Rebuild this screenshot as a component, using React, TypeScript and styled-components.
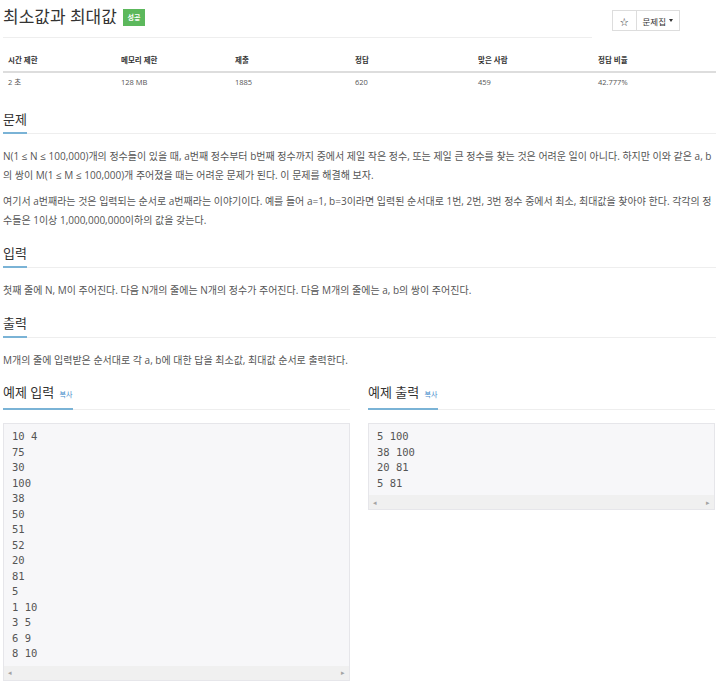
import React from 'react';
import styled, {createGlobalStyle} from "styled-components";

const GlobalStyle = createGlobalStyle`
  body {
    margin: 0;
    background: #fff;
    font-family: "Open Sans", "Noto Sans CJK KR", sans-serif;
    color: #555;
  }
`

const stats = [
    {label: "시간 제한", value: "2 초", width: 113},
    {label: "메모리 제한", value: "128 MB", width: 114},
    {label: "제출", value: "1885", width: 120},
    {label: "정답", value: "620", width: 123},
    {label: "맞은 사람", value: "459", width: 120},
    {label: "정답 비율", value: "42.777%", width: 123},
]

const sampleInput = `10 4
75
30
100
38
50
51
52
20
81
5
1 10
3 5
6 9
8 10`

const sampleOutput = `5 100
38 100
20 81
5 81`

const App = () => {
    return (
        <Page>
            <GlobalStyle/>
            <TitleRow>
                <TitleArea>
                    <Title>최소값과 최대값 <Badge>성공</Badge></Title>
                </TitleArea>
                <ButtonGroup>
                    <GroupButton>☆</GroupButton>
                    <GroupButton>문제집 <Caret/></GroupButton>
                </ButtonGroup>
            </TitleRow>

            <StatsTable>
                <colgroup>
                    {stats.map(s => <col key={s.label} style={{width: s.width}}/>)}
                </colgroup>
                <thead>
                <tr>
                    {stats.map(s => <th key={s.label}>{s.label}</th>)}
                </tr>
                </thead>
                <tbody>
                <tr>
                    {stats.map(s => <td key={s.label}>{s.value}</td>)}
                </tr>
                </tbody>
            </StatsTable>

            <Section>
                <Headline><h2>문제</h2></Headline>
                <Text>
                    <p>N(1 ≤ N ≤ 100,000)개의 정수들이 있을 때, a번째 정수부터 b번째 정수까지 중에서 제일 작은 정수, 또는 제일 큰 정수를 찾는 것은 어려운 일이 아니다. 하지만 이와 같은 a, b의 쌍이 M(1 ≤ M ≤ 100,000)개 주어졌을 때는 어려운 문제가 된다. 이 문제를 해결해 보자.</p>
                    <p>여기서 a번째라는 것은 입력되는 순서로 a번째라는 이야기이다. 예를 들어 a=1, b=3이라면 입력된 순서대로 1번, 2번, 3번 정수 중에서 최소, 최대값을 찾아야 한다. 각각의 정수들은 1이상 1,000,000,000이하의 값을 갖는다.</p>
                </Text>
            </Section>

            <Section>
                <Headline><h2>입력</h2></Headline>
                <Text>
                    <p>첫째 줄에 N, M이 주어진다. 다음 N개의 줄에는 N개의 정수가 주어진다. 다음 M개의 줄에는 a, b의 쌍이 주어진다.</p>
                </Text>
            </Section>

            <Section>
                <Headline><h2>출력</h2></Headline>
                <Text>
                    <p>M개의 줄에 입력받은 순서대로 각 a, b에 대한 답을 최소값, 최대값 순서로 출력한다.</p>
                </Text>
            </Section>

            <Samples>
                <Sample>
                    <Headline><h2>예제 입력 <CopyLink href="#">복사</CopyLink></h2></Headline>
                    <SampleBox>
                        <pre>{sampleInput}</pre>
                        <ScrollBar><span>◂</span><span>▸</span></ScrollBar>
                    </SampleBox>
                </Sample>
                <Sample>
                    <Headline><h2>예제 출력 <CopyLink href="#">복사</CopyLink></h2></Headline>
                    <SampleBox>
                        <pre>{sampleOutput}</pre>
                        <ScrollBar><span>◂</span><span>▸</span></ScrollBar>
                    </SampleBox>
                </Sample>
            </Samples>
        </Page>
    );
};

export default App;

const Page = styled.div`
  width: 713px;
  margin-left: 3px;
`

const TitleRow = styled.div`
  display: flex;
  align-items: flex-start;
`

const TitleArea = styled.div`
  width: 589px;
  padding-top: 6px;
  border-bottom: 1px solid #eee;
  padding-bottom: 9px;
`

const Title = styled.h1`
  margin: 0;
  font-size: 17px;
  line-height: 22px;
  font-weight: normal;
  color: #333;
  display: flex;
  align-items: center;
`

const Badge = styled.span`
  display: inline-flex;
  align-items: center;
  justify-content: center;
  margin-left: 6px;
  margin-top: 1px;
  width: 22px;
  height: 17px;
  background: #5cb85c;
  color: #fff;
  font-size: 7px;
  font-weight: bold;
`

const ButtonGroup = styled.div`
  display: flex;
  margin-left: 20px;
  margin-top: 10px;
`

const GroupButton = styled.button`
  display: flex;
  align-items: center;
  height: 21px;
  padding: 0 7px;
  background: #fff;
  border: 1px solid #ddd;
  font-family: "Open Sans", "Noto Sans CJK KR", sans-serif;
  font-size: 8.5px;
  color: #333;

  & + & {
    margin-left: -1px;
    padding: 0 6px;
  }
`

const Caret = styled.span`
  display: inline-block;
  margin-left: 3px;
  border-top: 3px solid #333;
  border-left: 2.5px solid transparent;
  border-right: 2.5px solid transparent;
`

const StatsTable = styled.table`
  width: 713px;
  margin-top: 12px;
  border-collapse: collapse;
  table-layout: fixed;
  font-size: 7.5px;

  th {
    text-align: left;
    color: #333;
    font-weight: bold;
    padding: 5px 5px;
    line-height: 11px;
    border-bottom: 2px solid #ddd;
  }

  td {
    padding: 5px 5px;
    line-height: 9px;
    color: #555;
  }
`

const Section = styled.section`
  margin-top: 15px;

  & + & {
    margin-top: 11px;
  }
`

const Headline = styled.div`
  border-bottom: 1px solid #eee;

  h2 {
    display: inline-block;
    margin: 0 0 -1px;
    padding-bottom: 4px;
    font-size: 13px;
    line-height: 18px;
    font-weight: normal;
    color: #333;
    border-bottom: 2px solid #7ab3d6;
  }
`

const Text = styled.div`
  margin-top: 13px;
  font-size: 10px;
  line-height: 19px;
  color: #555;

  p {
    margin: 0 0 7px;
  }

  p:last-child {
    margin-bottom: 0;
  }
`

const CopyLink = styled.a`
  font-size: 7px;
  color: #428bca;
  text-decoration: none;
  margin-left: 2px;
`

const Samples = styled.div`
  display: flex;
  gap: 18px;
  margin-top: 10px;
`

const Sample = styled.div`
  width: 347px;
`

const SampleBox = styled.div`
  margin-top: 13px;
  background: #f7f7f9;
  border: 1px solid #e6e6ea;

  pre {
    margin: 0;
    padding: 5px 8px 4px;
    font-family: "DejaVu Sans Mono", monospace;
    font-size: 10.5px;
    line-height: 15.5px;
    color: #555;
  }
`

const ScrollBar = styled.div`
  display: flex;
  justify-content: space-between;
  align-items: center;
  height: 14px;
  padding: 0 4px;
  background: #f0f0f0;
  font-size: 7px;
  color: #a3a3a3;
`
